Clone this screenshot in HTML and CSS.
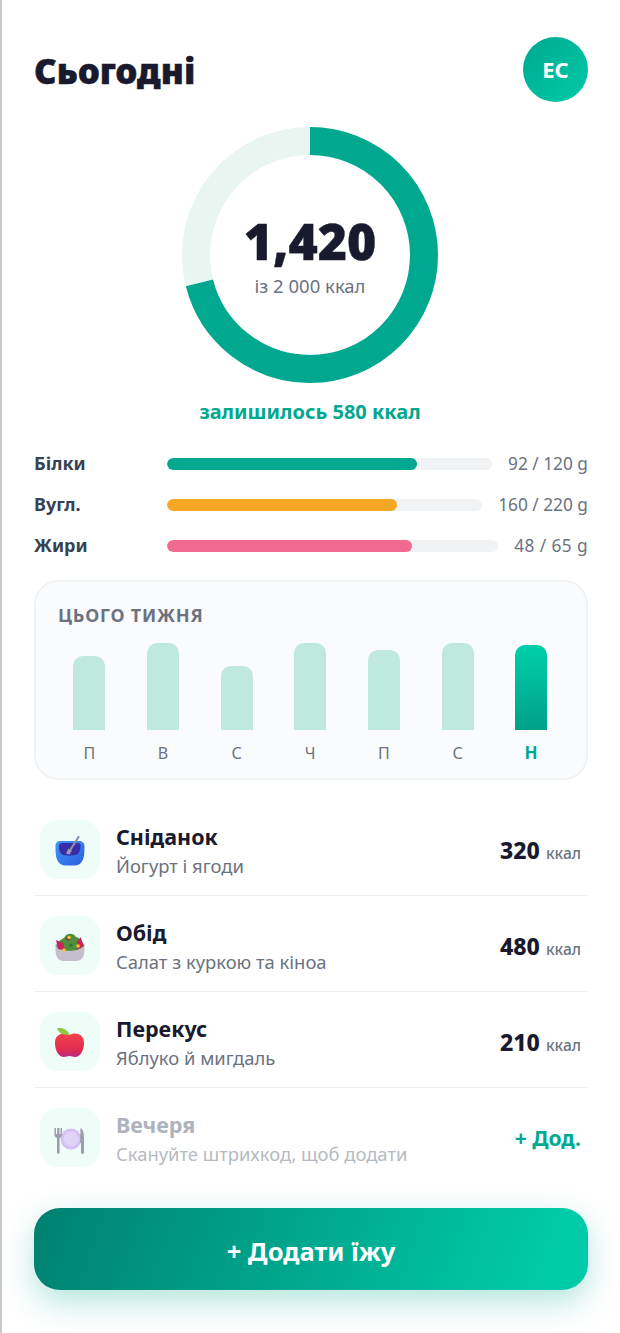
FILE: index.html
```html
<!DOCTYPE html>
<html lang="uk">
<head>
<meta charset="utf-8">
<title>Сьогодні</title>
<link rel="stylesheet" href="styles.css">
</head>
<body>
<main class="page">
  <header class="top">
    <h1 class="title">Сьогодні</h1>
    <div class="avatar">ЕС</div>
  </header>

  <section class="ring-wrap">
    <div class="ring">
      <svg class="ring-svg" viewBox="0 0 256 256" width="256" height="256">
        <circle cx="128" cy="128" r="114" fill="none" stroke="#e8f5f1" stroke-width="28"/>
        <circle cx="128" cy="128" r="114" fill="none" stroke="#00a88f" stroke-width="28" stroke-dasharray="508.6 716.3" transform="rotate(-90 128 128)"/>
      </svg>
      <div class="ring-center">
        <div class="ring-num">1,420</div>
        <div class="ring-sub">із 2 000 ккал</div>
      </div>
    </div>
    <div class="remain">залишилось 580 ккал</div>
  </section>

  <section class="macros">
    <div class="macro"><span class="macro-name">Білки</span><div class="track"><div class="fill fill-p" style="width:77%"></div></div><span class="macro-val">92 / 120 g</span></div>
    <div class="macro"><span class="macro-name">Вугл.</span><div class="track"><div class="fill fill-c" style="width:73%"></div></div><span class="macro-val">160 / 220 g</span></div>
    <div class="macro"><span class="macro-name">Жири</span><div class="track"><div class="fill fill-f" style="width:74%"></div></div><span class="macro-val macro-val-wide">48 / 65 g</span></div>
  </section>

  <section class="week">
    <h2 class="week-title">ЦЬОГО ТИЖНЯ</h2>
    <div class="days">
      <div class="day"><div class="bar-box"><div class="bar" style="height:74px"></div></div><span class="day-label">П</span></div>
      <div class="day"><div class="bar-box"><div class="bar" style="height:87px"></div></div><span class="day-label">В</span></div>
      <div class="day"><div class="bar-box"><div class="bar" style="height:64px"></div></div><span class="day-label">С</span></div>
      <div class="day"><div class="bar-box"><div class="bar" style="height:87px"></div></div><span class="day-label">Ч</span></div>
      <div class="day"><div class="bar-box"><div class="bar" style="height:80px"></div></div><span class="day-label">П</span></div>
      <div class="day"><div class="bar-box"><div class="bar" style="height:87px"></div></div><span class="day-label">С</span></div>
      <div class="day"><div class="bar-box"><div class="bar bar-on" style="height:85px"></div></div><span class="day-label day-on">Н</span></div>
    </div>
  </section>

  <section class="meals">
    <div class="meal">
      <div class="meal-icon">
        <svg viewBox="0 0 32 32" width="32" height="32">
          <defs><linearGradient id="bw" x1="0" y1="0" x2="1" y2="1"><stop offset="0" stop-color="#3f95f7"/><stop offset="1" stop-color="#2a5fe0"/></linearGradient></defs>
          <path d="M1.500 12c0-3 2-5 5-5h18.500c3 0 5.500 2 5.500 5 0 8-.5 13-3 16-1.500 2-3.500 3.500-7 3.500h-9c-3.500 0-5.500-1.500-7-3.500-2.500-3-3-8-3-16z" fill="url(#bw)"/>
          <path d="M5 11.500c0-1.500 1-2.500 3-2.500h15.500c2 0 3 1 3 2.500 0 4-1 7.500-3.500 9-4 1.500-11 1.500-15 0-2.500-1.500-3-5-3-9z" fill="#3a2ca8"/>
          <path d="M12 19.500l2.500-5 3.500 2-2.500 4z" fill="#9a9ab8"/>
          <path d="M16.500 15.500L24.500 3" stroke="#8f8fa8" stroke-width="2.200" stroke-linecap="round"/>
        </svg>
      </div>
      <div class="meal-text"><div class="meal-name">Сніданок</div><div class="meal-sub">Йогурт і ягоди</div></div>
      <div class="meal-kcal"><b class="kcal-num">320</b> <span class="kcal-unit">ккал</span></div>
    </div>
    <div class="meal">
      <div class="meal-icon">
        <svg viewBox="0 0 32 32" width="32" height="32">
          <path d="M1.500 15h29v5c0 7-3 11-8 11H9.500c-5 0-8-4-8-11z" fill="#c5bfcb"/>
          <path d="M1.500 15.500c0-1 1-1.500 2-1l25 0c1-.5 2 0 2 1-1 6-28 6-29 0z" fill="#a49bab"/>
          <path d="M4 17c-1-5 3-8 6-9 2-5 9-6 12-1 4 1.500 7 4 6 10-4 5-20 5-24 0z" fill="#4d8f3a"/>
          <path d="M2 10l7 3 2.500 7.500L4 19z" fill="#c5265a"/>
          <path d="M26.500 7l3.500 9-7.500 4 .5-8z" fill="#c5265a"/>
          <path d="M13 6l4 2-2.500 3-2.500-2z" fill="#8a1f4d"/>
          <circle cx="15" cy="7.500" r="1.800" fill="#f4c928"/>
          <circle cx="10" cy="20" r="1.700" fill="#f4c928"/>
          <circle cx="24" cy="16" r="1.800" fill="#f4c928"/>
          <circle cx="17" cy="15" r="1.500" fill="#2f6f2a"/>
        </svg>
      </div>
      <div class="meal-text"><div class="meal-name">Обід</div><div class="meal-sub">Салат з куркою та кіноа</div></div>
      <div class="meal-kcal"><b class="kcal-num">480</b> <span class="kcal-unit">ккал</span></div>
    </div>
    <div class="meal">
      <div class="meal-icon">
        <svg viewBox="0 0 32 32" width="32" height="32">
          <defs><linearGradient id="ap" x1="0" y1="0" x2="0" y2="1"><stop offset="0" stop-color="#f5404e"/><stop offset=".7" stop-color="#e02c50"/><stop offset="1" stop-color="#b52a8c"/></linearGradient></defs>
          <path d="M15.500 9c5-3 14.500-2 14.500 8 0 8-4 14-9 14-2 0-3.500-1-5.500-1s-3.500 1-5.500 1c-5 0-9-6-9-14 0-10 9.500-11 14.500-8z" fill="url(#ap)"/>
          <path d="M3 2c5-.5 10 1 12.500 6.500-5.500 1-10.500-.5-12.500-6.500z" fill="#8cc63f"/>
        </svg>
      </div>
      <div class="meal-text"><div class="meal-name">Перекус</div><div class="meal-sub">Яблуко й мигдаль</div></div>
      <div class="meal-kcal"><b class="kcal-num">210</b> <span class="kcal-unit">ккал</span></div>
    </div>
    <div class="meal meal-last">
      <div class="meal-icon">
        <svg class="icon-dim" viewBox="0 0 32 32" width="32" height="32">
          <circle cx="17" cy="17" r="10.500" fill="#c9a8f0"/>
          <circle cx="17" cy="17" r="7.500" fill="#d9c2f5"/>
          <path d="M.5 6v6.500c0 2 1 3 2.500 3.500v14.500a1.300 1.300 0 0 0 2.600 0V16c1.400-.5 2.400-1.500 2.400-3.500V6H6.600v6H5.500V6H3.200v6H2V6z" fill="#7c7592"/>
          <path d="M26.500 6c2.500 1 3.500 5 3.500 10v14.500a1.500 1.500 0 0 1-3 0V21h-1z" fill="#7c7592"/>
        </svg>
      </div>
      <div class="meal-text"><div class="meal-name name-dim">Вечеря</div><div class="meal-sub sub-dim">Скануйте штрихкод, щоб додати</div></div>
      <div class="meal-add">+ Дод.</div>
    </div>
  </section>

  <button class="cta">+ Додати їжу</button>
</main>
</body>
</html>
```

FILE: styles.css
```css
* { box-sizing: border-box; margin: 0; padding: 0; }
html, body { background: #fff; }
body {
  margin: 0;
  font-family: "Noto Sans", "Open Sans", sans-serif;
  color: #1a1a2e;
  height: 1333px;
  overflow: hidden;
  border-left: 2px solid #c8c8c8;
}
.page { padding: 37px 32px 0; display: flex; flex-direction: column; }

.top { display: flex; justify-content: space-between; align-items: center; height: 64px; }
.title { font-size: 35px; font-weight: 900; line-height: 1.2; margin-top: 3px; -webkit-text-stroke: .4px #1a1a2e; }
.avatar {
  width: 65px; height: 65px; border-radius: 50%;
  background: linear-gradient(135deg, #00a88f, #00cba9);
  color: #fff; font-size: 22px; font-weight: 700;
  display: flex; align-items: center; justify-content: center;
}

.ring-wrap { display: flex; flex-direction: column; align-items: center; margin: 26px 2px 0 0; }
.ring { width: 256px; height: 256px; position: relative; }
.ring-svg { display: block; }
.ring-center {
  position: absolute; inset: 0; padding-bottom: 2px;
  display: flex; flex-direction: column; align-items: center; justify-content: center;
}
.ring-num { font-size: 50px; font-weight: 900; line-height: 60px; margin-top: 1px; -webkit-text-stroke: .4px #1a1a2e; }
.ring-sub { font-size: 18.5px; color: #6b7280; line-height: 24px; margin-top: 3px; }
.remain { margin-top: 16px; font-size: 20px; font-weight: 700; color: #00a88f; line-height: 26px; }

.macros { display: flex; flex-direction: column; gap: 15px; margin-top: 26px; }
.macro { display: flex; align-items: center; gap: 16px; height: 26px; }
.macro-name { width: 117px; font-size: 18px; font-weight: 700; color: #374151; margin-top: -2px; }
.macro-val { font-size: 17.3px; color: #6b7280; white-space: nowrap; margin-top: -2px; }
.macro-val-wide { letter-spacing: .4px; }
.track { flex: 1; height: 12px; border-radius: 6px; background: #f0f2f4; overflow: hidden; }
.fill { height: 100%; border-radius: 6px; }
.fill-p { background: #00a88f; }
.fill-c { background: #f5a623; }
.fill-f { background: #f0698e; }

.week {
  margin-top: 21px; height: 200px;
  background: #f9fbfc; border: 2px solid #f0f3f4; border-radius: 24px;
  padding: 21px 24px 0 22px;
}
.week-title { font-size: 18px; font-weight: 700; letter-spacing: .8px; color: #6b7280; line-height: 24px; }
.days { display: flex; gap: 12px; margin: 13px 0 0 .5px; }
.day { flex: 1; display: flex; flex-direction: column; align-items: center; }
.bar-box { height: 90px; display: flex; align-items: flex-end; }
.bar { width: 32px; background: #c0e9dd; border-radius: 10px 10px 0 0; }
.bar-on { background: linear-gradient(180deg, #00d0aa, #00a08a); }
.day-label { margin-top: 12px; font-size: 16px; color: #6b7280; line-height: 22px; }
.day-on { color: #00a88f; font-weight: 700; font-size: 17px; }

.meals { margin-top: 20px; display: flex; flex-direction: column; }
.meal {
  display: flex; align-items: center;
  padding: 20px 7px 16px 6px;
  border-bottom: 1px solid #eef0f2;
}
.meal-last { border-bottom: 0; }
.meal-icon {
  width: 60px; height: 59px; border-radius: 18px; background: #effdf9;
  display: flex; align-items: center; justify-content: center; flex: none;
}
.icon-dim { opacity: .7; }
.meal-text { flex: 1; margin-left: 16px; padding-top: 2px; }
.meal-name { font-size: 21.5px; font-weight: 700; color: #1a1a2e; line-height: 28px; }
.meal-sub { font-size: 18.4px; color: #6b7280; line-height: 26px; margin-top: 2px; }
.name-dim { color: #adb2bd; }
.sub-dim { color: #b5bac3; }
.meal-kcal { white-space: nowrap; }
.kcal-num { font-size: 23px; font-weight: 800; }
.kcal-unit { font-size: 15.5px; color: #6b7280; font-weight: 500; margin-left: 2px; }
.meal-add { font-size: 21px; font-weight: 700; color: #00a88f; }

.cta {
  margin-top: 25px; height: 82px; width: 100%; padding-top: 3px;
  border: 0; border-radius: 26px;
  background: linear-gradient(110deg, #008070, #00cba9 92%);
  color: #fff; font-family: inherit; font-size: 25.5px; font-weight: 700;
  box-shadow: 0 12px 32px rgba(0, 168, 143, .3);
}
```
